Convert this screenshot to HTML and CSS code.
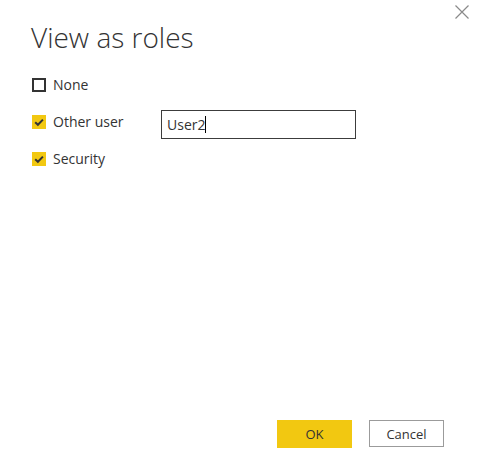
FILE: index.html
```html
<!DOCTYPE html>
<html>
<head>
<meta charset="utf-8">
<link rel="stylesheet" href="styles.css">
</head>
<body>
<div class="dialog">
  <button class="close" aria-label="Close">
    <svg width="14" height="14" viewBox="0 0 14 14"><path d="M0.5 0.5 L13.5 13.5 M13.5 0.5 L0.5 13.5" stroke="#8a8a8a" stroke-width="1.2" fill="none"/></svg>
  </button>
  <h1 class="title">View as roles</h1>
  <div class="options">
    <div class="row">
      <span class="box"></span>
      <span class="label">None</span>
    </div>
    <div class="row">
      <span class="box checked"><svg width="14" height="14" viewBox="0 0 14 14"><path d="M3.2 7.2 L5.9 9.8 L10.9 4.6" stroke="#333" stroke-width="2" fill="none"/></svg></span>
      <span class="label label-wide">Other user</span>
      <div class="input">User2<span class="caret"></span></div>
    </div>
    <div class="row">
      <span class="box checked"><svg width="14" height="14" viewBox="0 0 14 14"><path d="M3.2 7.2 L5.9 9.8 L10.9 4.6" stroke="#333" stroke-width="2" fill="none"/></svg></span>
      <span class="label">Security</span>
    </div>
  </div>
  <div class="spacer"></div>
  <div class="actions">
    <button class="btn btn-primary">OK</button>
    <button class="btn btn-secondary">Cancel</button>
  </div>
</div>
</body>
</html>
```
FILE: styles.css
```css
html, body {
  margin: 0;
  padding: 0;
  background: #ffffff;
}
body {
  font-family: "Open Sans", "Noto Sans", sans-serif;
  color: #333333;
}
.dialog {
  position: relative;
  width: 477px;
  height: 461px;
  box-sizing: border-box;
  padding: 18px 33px 13px 32px;
  display: flex;
  flex-direction: column;
}
.close {
  position: absolute;
  top: 5px;
  left: 455px;
  width: 14px;
  height: 14px;
  padding: 0;
  border: 0;
  background: transparent;
  display: block;
}
.close svg { display: block; }
.title {
  margin: 0 0 0 -1px;
  font-size: 28px;
  font-weight: 300;
  line-height: 38px;
  color: #333333;
  letter-spacing: 0;
}
.options {
  margin-top: 14px;
  display: flex;
  flex-direction: column;
  gap: 8px;
}
.row {
  display: flex;
  align-items: center;
  height: 29px;
}
.box {
  width: 14px;
  height: 14px;
  box-sizing: border-box;
  border: 2px solid #333333;
  background: #ffffff;
  flex: none;
  display: block;
}
.box.checked {
  border: 0;
  background: #f2c811;
}
.box svg { display: block; }
.label {
  margin-left: 7px;
  font-size: 14px;
  color: #333333;
  line-height: 20px;
}
.label-wide {
  width: 108px;
}
.input {
  width: 195px;
  height: 29px;
  margin-top: 6px;
  box-sizing: border-box;
  border: 1px solid #3c3c3c;
  font-size: 14px;
  line-height: 27px;
  padding-left: 5px;
  color: #333333;
  display: flex;
  align-items: center;
}
.caret {
  display: inline-block;
  width: 1px;
  height: 17px;
  background: #000;
}
.spacer { flex: 1; }
.actions {
  display: flex;
  justify-content: flex-end;
  gap: 17px;
}
.btn {
  width: 75px;
  height: 28px;
  box-sizing: border-box;
  font-family: "Open Sans", "Noto Sans", sans-serif;
  font-size: 13px;
  color: #333333;
  padding: 0;
}
.btn-primary {
  background: #f2c811;
  border: 0;
}
.btn-secondary {
  background: #ffffff;
  border: 1px solid #9b9b9b;
  height: 27px;
}
```
